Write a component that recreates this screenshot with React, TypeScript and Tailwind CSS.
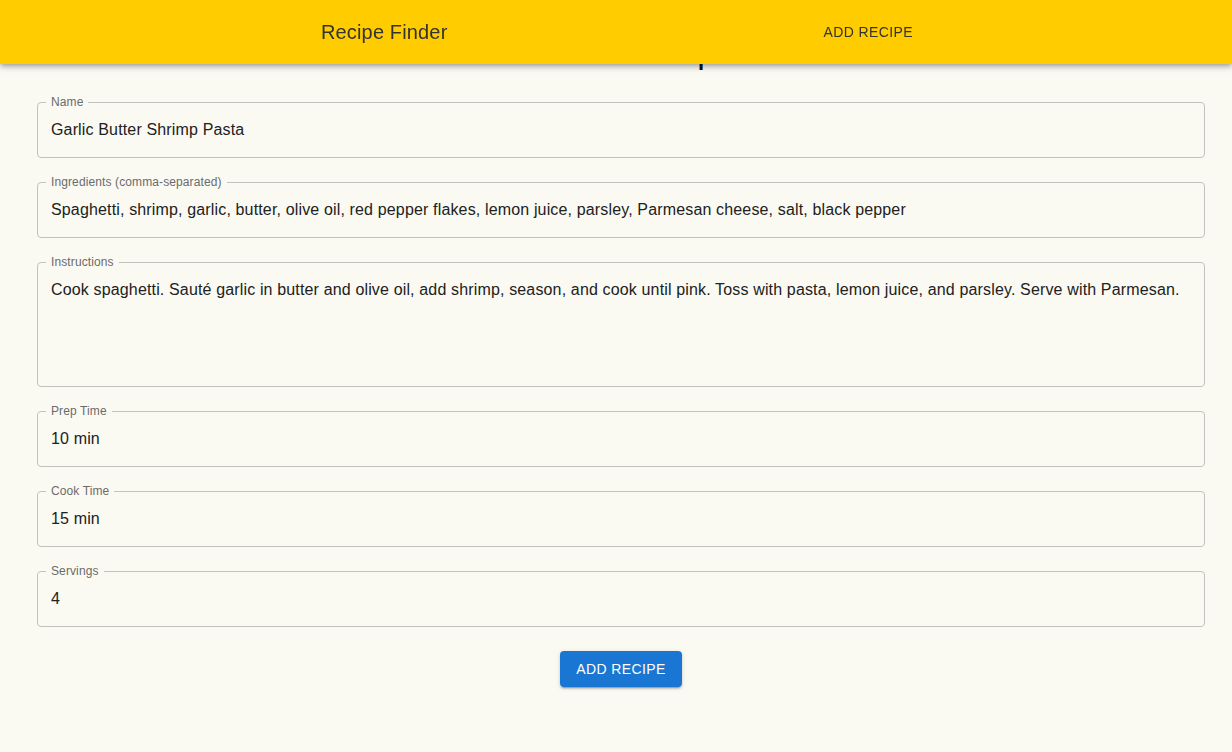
import React, { useState } from 'react';

interface FieldProps {
  label: string;
  value: string;
  multiline?: boolean;
  onChange: (v: string) => void;
}

const Field: React.FC<FieldProps> = ({ label, value, multiline, onChange }) => {
  return (
    <fieldset className="border border-[#c3c3bd] rounded px-[13px] pb-[16px] mb-[16px]">
      <legend className="ml-[-5px] px-[5px] text-[12px] leading-[16px] tracking-[0.11px] text-[#6b6b6b]">{label}</legend>
      {multiline ? (
        <textarea
          value={value}
          onChange={(e) => onChange(e.target.value)}
          className="block w-full mt-[8px] h-[92px] resize-none bg-transparent outline-none text-[16px] leading-[23px] tracking-[0.15px] text-[#212121]"
        />
      ) : (
        <input
          value={value}
          onChange={(e) => onChange(e.target.value)}
          className="block w-full mt-[8px] h-[23px] bg-transparent outline-none text-[16px] leading-[23px] tracking-[0.15px] text-[#212121]"
        />
      )}
    </fieldset>
  );
};

const App: React.FC = () => {
  const [name, setName] = useState('Garlic Butter Shrimp Pasta');
  const [ingredients, setIngredients] = useState(
    'Spaghetti, shrimp, garlic, butter, olive oil, red pepper flakes, lemon juice, parsley, Parmesan cheese, salt, black pepper'
  );
  const [instructions, setInstructions] = useState(
    'Cook spaghetti. Sauté garlic in butter and olive oil, add shrimp, season, and cook until pink. Toss with pasta, lemon juice, and parsley. Serve with Parmesan.'
  );
  const [prepTime, setPrepTime] = useState('10 min');
  const [cookTime, setCookTime] = useState('15 min');
  const [servings, setServings] = useState('4');

  return (
    <div className="min-h-screen bg-[#fafaf3] font-['Liberation_Sans',Arial,sans-serif]">
      <header className="fixed top-0 inset-x-0 z-10 h-16 bg-[#ffcc00] flex items-center pl-[321px] shadow-[0_2px_4px_-1px_rgba(0,0,0,0.2),0_4px_5px_0_rgba(0,0,0,0.14),0_1px_10px_0_rgba(0,0,0,0.12)]">
        <span className="text-[20px] leading-[32px] tracking-[0.15px] text-[#333]">Recipe Finder</span>
        <button className="ml-[368px] px-2 py-1.5 text-[14px] leading-[24px] tracking-[0.4px] text-[#333] uppercase">
          Add Recipe
        </button>
      </header>

      <main className="pt-[30px] pl-[37px] pr-[27px] pb-10">
        {/* heading sits under the fixed bar, only the "p" tail shows */}
        <h1 className="pl-[22px] text-center text-[34px] leading-[42px] tracking-[0.25px] text-[#111]">Add a Recipe</h1>
        <form className="mt-[22px]" onSubmit={(e) => e.preventDefault()}>
          <Field label="Name" value={name} onChange={setName} />
          <Field label="Ingredients (comma-separated)" value={ingredients} onChange={setIngredients} />
          <Field label="Instructions" value={instructions} onChange={setInstructions} multiline />
          <Field label="Prep Time" value={prepTime} onChange={setPrepTime} />
          <Field label="Cook Time" value={cookTime} onChange={setCookTime} />
          <Field label="Servings" value={servings} onChange={setServings} />
          <div className="flex justify-center mt-[24px]">
            <button
              type="submit"
              className="h-9 px-4 rounded bg-[#1976d2] text-white text-[14px] tracking-[0.4px] uppercase shadow-[0_3px_1px_-2px_rgba(0,0,0,0.2),0_2px_2px_0_rgba(0,0,0,0.14),0_1px_5px_0_rgba(0,0,0,0.12)]"
            >
              Add Recipe
            </button>
          </div>
        </form>
      </main>
    </div>
  );
};

export default App;
